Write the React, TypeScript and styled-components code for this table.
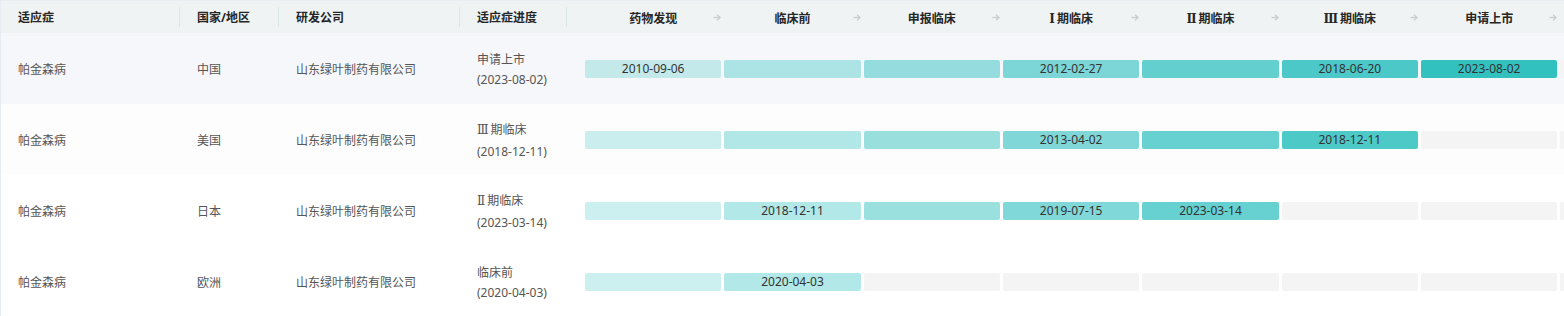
import React from "react";
import styled, { createGlobalStyle } from "styled-components";

const Global = createGlobalStyle`
  html, body { margin: 0; padding: 0; background: #ffffff; overflow: hidden; }
  body { font-family: "Noto Sans", "Noto Sans CJK SC", sans-serif; }
`;

const COLS = "179px 99px 181px 107px 1fr";
const STAGE_W = 136.33;
const STAGE_GAP = 3;

const Table = styled.div`
  width: 1700px;
  border-left: 1px solid #e6ecf2;
  font-size: 12px;
`;

const HeaderRow = styled.div`
  display: grid;
  grid-template-columns: ${COLS};
  height: 33px;
  background: #eff3f4;
  border-top: 1px solid #e9eef3;
  box-sizing: border-box;
`;

const HeadCell = styled.div`
  display: flex;
  align-items: center;
  justify-content: space-between;
  padding-left: 17px;
  font-weight: 700;
  color: #262626;
`;

const Divider = styled.span`
  width: 1px;
  height: 20px;
  background: #dde6e6;
`;

const StageGrid = styled.div`
  display: grid;
  grid-template-columns: repeat(8, ${STAGE_W}px);
  column-gap: ${STAGE_GAP}px;
  padding-left: 18px;
  align-items: center;
`;

const StageHead = styled.div`
  display: grid;
  grid-template-columns: 8px 1fr 8px;
  align-items: center;
  font-weight: 700;
  color: #262626;
  height: 32px;
`;

const StageTitle = styled.span`
  grid-column: 2;
  text-align: center;
  font-family: "Noto Sans CJK SC", sans-serif;
`;

const Numeral = styled.span`
  font-family: "DejaVu Serif", "DejaVu Sans", serif;
  font-size: 12px;
  margin-right: 2px;
`;

const Arrow = styled.svg`
  grid-column: 3;
  width: 8px;
  height: 7px;
  display: block;
`;

const BodyRow = styled.div<{ $bg: string }>`
  display: grid;
  grid-template-columns: ${COLS};
  height: 71px;
  background: ${(p) => p.$bg};
`;

const Cell = styled.div`
  display: flex;
  align-items: center;
  padding-left: 17px;
  color: #555555;
`;

const ProgressCell = styled.div`
  display: flex;
  flex-direction: column;
  justify-content: center;
  padding-left: 17px;
  color: #555555;
  line-height: 21px;
`;

const Status = styled.div`
  font-family: "Noto Sans CJK SC", sans-serif;
`;

const Bar = styled.div<{ $alpha: number }>`
  height: 18px;
  border-radius: 2px;
  background: ${(p) =>
    p.$alpha > 0 ? `rgba(51, 193, 192, ${p.$alpha})` : "#f4f4f4"};
  color: #333333;
  text-align: center;
  line-height: 18px;
  font-size: 12px;
`;

const withNumerals = (text: string) => {
  const m = text.match(/^([ⅠⅡⅢ])(.*)$/);
  if (!m) return text;
  return (
    <>
      <Numeral>{m[1]}</Numeral>
      {m[2]}
    </>
  );
};

const stages = [
  "药物发现",
  "临床前",
  "申报临床",
  "Ⅰ期临床",
  "Ⅱ期临床",
  "Ⅲ期临床",
  "申请上市",
  "",
];

type Row = {
  country: string;
  status: string;
  date: string;
  bars: string[];
};

const rows: Row[] = [
  {
    country: "中国",
    status: "申请上市",
    date: "(2023-08-02)",
    bars: ["2010-09-06", "", "", "2012-02-27", "", "2018-06-20", "2023-08-02"],
  },
  {
    country: "美国",
    status: "Ⅲ期临床",
    date: "(2018-12-11)",
    bars: ["", "", "", "2013-04-02", "", "2018-12-11"],
  },
  {
    country: "日本",
    status: "Ⅱ期临床",
    date: "(2023-03-14)",
    bars: ["", "2018-12-11", "", "2019-07-15", "2023-03-14"],
  },
  {
    country: "欧洲",
    status: "临床前",
    date: "(2020-04-03)",
    bars: ["", "2020-04-03"],
  },
];

const rowBg = ["#f5f7fa", "#fdfdfd", "#ffffff", "#ffffff"];

const ArrowIcon = () => (
  <Arrow viewBox="0 0 8 7" fill="none" stroke="#c9ccd0" strokeWidth="1.3">
    <path d="M0.5 3.5H7" />
    <path d="M4 0.7L7 3.5L4 6.3" />
  </Arrow>
);

export default function App() {
  return (
    <>
      <Global />
      <Table>
        <HeaderRow>
          <HeadCell>
            适应症
            <Divider />
          </HeadCell>
          <HeadCell>
            国家/地区
            <Divider />
          </HeadCell>
          <HeadCell>
            研发公司
            <Divider />
          </HeadCell>
          <HeadCell>
            适应症进度
            <Divider />
          </HeadCell>
          <StageGrid>
            {stages.map((s, i) => (
              <StageHead key={i}>
                <StageTitle>{withNumerals(s)}</StageTitle>
                <ArrowIcon />
              </StageHead>
            ))}
          </StageGrid>
        </HeaderRow>
        {rows.map((r, i) => (
          <BodyRow key={r.country} $bg={rowBg[i]}>
            <Cell>帕金森病</Cell>
            <Cell>{r.country}</Cell>
            <Cell>山东绿叶制药有限公司</Cell>
            <ProgressCell>
              <Status>{withNumerals(r.status)}</Status>
              <div>{r.date}</div>
            </ProgressCell>
            <StageGrid>
              {stages.map((s, j) => {
                const filled = j < r.bars.length;
                return (
                  <Bar key={j} $alpha={filled ? (j + 2) / 8 : 0}>
                    {filled ? r.bars[j] : ""}
                  </Bar>
                );
              })}
            </StageGrid>
          </BodyRow>
        ))}
      </Table>
    </>
  );
}
